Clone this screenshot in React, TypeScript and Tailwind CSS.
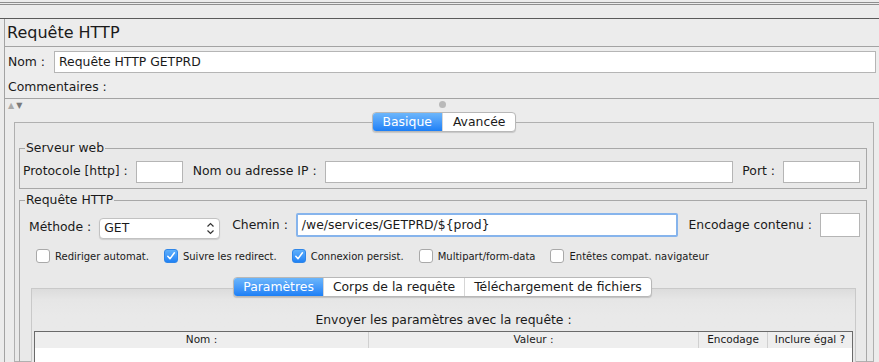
import React from 'react';

const FONT = { fontFamily: '"DejaVu Sans", "Liberation Sans", sans-serif' };

function Field({ className = '', value = '', focus = false }: { className?: string, value?: string, focus?: boolean }) {
  return (
    <div
      className={`h-[22px] bg-white flex items-center px-[4px] text-[12.4px] text-[#1a1a1a] whitespace-nowrap overflow-hidden ${
        focus ? 'border-2 border-[#86b4ec] rounded-[2px]' : 'border border-[#b5b5b5]'
      } ${className}`}
    >
      {value}
    </div>
  );
}

function Check({ label, checked }: { label: string, checked?: boolean }) {
  return (
    <div className="flex items-center gap-[5px] text-[10px] text-[#1a1a1a]">
      <span
        className={`w-[14px] h-[14px] rounded-[3px] flex items-center justify-center ${
          checked ? 'bg-gradient-to-b from-[#5fb0fb] to-[#1f82f5] border border-[#2f86e8]' : 'bg-white border border-[#a9a9a9]'
        }`}
      >
        {checked && (
          <svg width="10" height="10" viewBox="0 0 10 10">
            <path d="M1.8 5.2 L4 7.8 L8.4 1.8" fill="none" stroke="white" strokeWidth="1.5" strokeLinecap="round" strokeLinejoin="round" />
          </svg>
        )}
      </span>
      {label}
    </div>
  );
}

function Tabs({ items, pad }: { items: string[], pad: string }) {
  return (
    <div className="flex h-[20px] rounded-[4px] border border-[#b8b8b8] bg-white shadow-[0_1px_1px_rgba(0,0,0,0.15)] overflow-hidden text-[12.4px]">
      {items.map((t, i) => (
        <div
          key={t}
          className={`flex items-center ${pad} ${
            i === 0 ? 'bg-gradient-to-b from-[#6cb6fb] to-[#1b7ff6] text-white' : 'text-[#1a1a1a] border-l border-[#d6d6d6]'
          }`}
        >
          {t}
        </div>
      ))}
    </div>
  );
}

export default function App() {
  return (
    <div className="w-[879px] h-[362px] overflow-hidden bg-[#ececec] text-[#1a1a1a]" style={FONT}>
      {/* top bars */}
      <div className="h-[17px] border-b border-[#5a5a5a]">
        <div className="mt-[2px] h-[3px] border-y border-[#8e8e8e]" />
      </div>

      <div className="ml-[4px] border-l border-[#a3a3a3] h-[345px] flex flex-col">
        <div className="h-[27px] flex items-center pl-[2px] text-[16px]">Requête HTTP</div>

        {/* nom / commentaires */}
        <div className="h-[53px] border-y border-[#a3a3a3] pl-[3px] pr-[3px] bg-[#ededed] text-[12.4px]">
          <div className="h-[30px] flex items-center gap-[9px]">
            <span>Nom :</span>
            <Field className="flex-1" value="Requête HTTP GETPRD" />
          </div>
          <div className="h-[21px] flex items-center">Commentaires :</div>
        </div>

        {/* splitter */}
        <div className="h-[13px] relative flex items-center pl-[3px] gap-[2px] text-[8px] leading-none">
          <span className="text-[#a8a8a8]">▲</span>
          <span className="text-[#7a7a7a]">▼</span>
          <span className="absolute left-[434px] top-[2px] w-[7px] h-[7px] rounded-full bg-[#b9b9b9]" />
        </div>

        {/* main tab pane */}
        <div className="flex flex-col items-center">
          <div className="relative z-10 -mb-[10px] ml-[4px]">
            <Tabs items={['Basique', 'Avancée']} pad="px-[10px]" />
          </div>
          <div className="self-stretch ml-[9px] mr-[5px] border border-[#b0b0b0] bg-[#e9e9e9] h-[240px] pl-[4px] pr-[6px] pt-[18px]">
            {/* Serveur web */}
            <fieldset className="border border-[#a8a8a8] h-[48px] pl-[3px] pr-[6px]">
              <legend className="text-[12.4px] px-[1px] ml-[2px] leading-[14px]">Serveur web</legend>
              <div className="h-[33px] flex items-center text-[12.4px]">
                <span>Protocole [http] :</span>
                <Field className="w-[47px] ml-[8px]" />
                <span className="ml-[10px]">Nom ou adresse IP :</span>
                <Field className="flex-1 ml-[8px]" />
                <span className="ml-[9px]">Port :</span>
                <Field className="w-[77px] ml-[8px]" />
              </div>
            </fieldset>

            {/* Requête HTTP */}
            <fieldset className="border border-[#a8a8a8] mt-[4px] h-[200px] pl-[3px] pr-[6px]">
              <legend className="text-[12.4px] px-[1px] ml-[2px] leading-[14px]">Requête HTTP</legend>
              <div className="h-[36px] flex items-center text-[12.4px] pl-[6px]">
                <span className="mt-[5px]">Méthode :</span>
                <div className="mt-[6px] ml-[8px] w-[121px] h-[21px] bg-white border border-[#c2c2c2] rounded-[4px] shadow-[0_1px_1px_rgba(0,0,0,0.12)] flex items-center justify-between pl-[4px] pr-[4px]">
                  <span>GET</span>
                  <svg width="9" height="13" viewBox="0 0 9 13">
                    <path d="M1.5 4.5 L4.5 1.5 L7.5 4.5 M1.5 8.5 L4.5 11.5 L7.5 8.5" fill="none" stroke="#333" strokeWidth="1.2" />
                  </svg>
                </div>
                <span className="ml-[12px]">Chemin :</span>
                <Field className="flex-1 ml-[8px] h-[24px]" value="/we/services/GETPRD/${prod}" focus />
                <span className="ml-[10px]">Encodage contenu :</span>
                <Field className="w-[40px] ml-[8px] h-[24px]" />
              </div>
              <div className="h-[26px] flex items-center pl-[13px] gap-[15px]">
                <Check label="Rediriger automat." />
                <Check label="Suivre les redirect." checked />
                <Check label="Connexion persist." checked />
                <Check label="Multipart/form-data" />
                <Check label="Entêtes compat. navigateur" />
              </div>

              {/* inner tab pane */}
              <div className="flex flex-col items-center mt-[8px]">
                <div className="relative z-10 -mb-[9px] ml-[2px]">
                  <Tabs items={['Paramètres', 'Corps de la requête', 'Téléchargement de fichiers']} pad="px-[9px]" />
                </div>
                <div className="self-stretch ml-[8px] mr-[4px] border border-[#c9c9c9] bg-gradient-to-b from-[#dcdcdc] via-[#e6e6e6] to-[#e9e9e9] via-[12%] to-[30%] h-[90px] px-[2px] pt-[19px]">
                  <div className="text-center text-[12.4px] h-[23px] leading-[23px]">Envoyer les paramètres avec la requête :</div>
                  <div className="border-t border-l border-r border-[#6a6a6a] bg-white h-[40px]">
                    <div className="h-[16px] flex text-[10.5px] bg-[#eeeeee]">
                      <div className="w-[334px] text-center border-r border-[#d0d0d0]">Nom :</div>
                      <div className="w-[330px] text-center border-r border-[#d0d0d0]">Valeur :</div>
                      <div className="w-[69px] text-center border-r border-[#d0d0d0]">Encodage</div>
                      <div className="flex-1 text-center">Inclure égal ?</div>
                    </div>
                  </div>
                </div>
              </div>
            </fieldset>
          </div>
        </div>
      </div>
    </div>
  );
}
